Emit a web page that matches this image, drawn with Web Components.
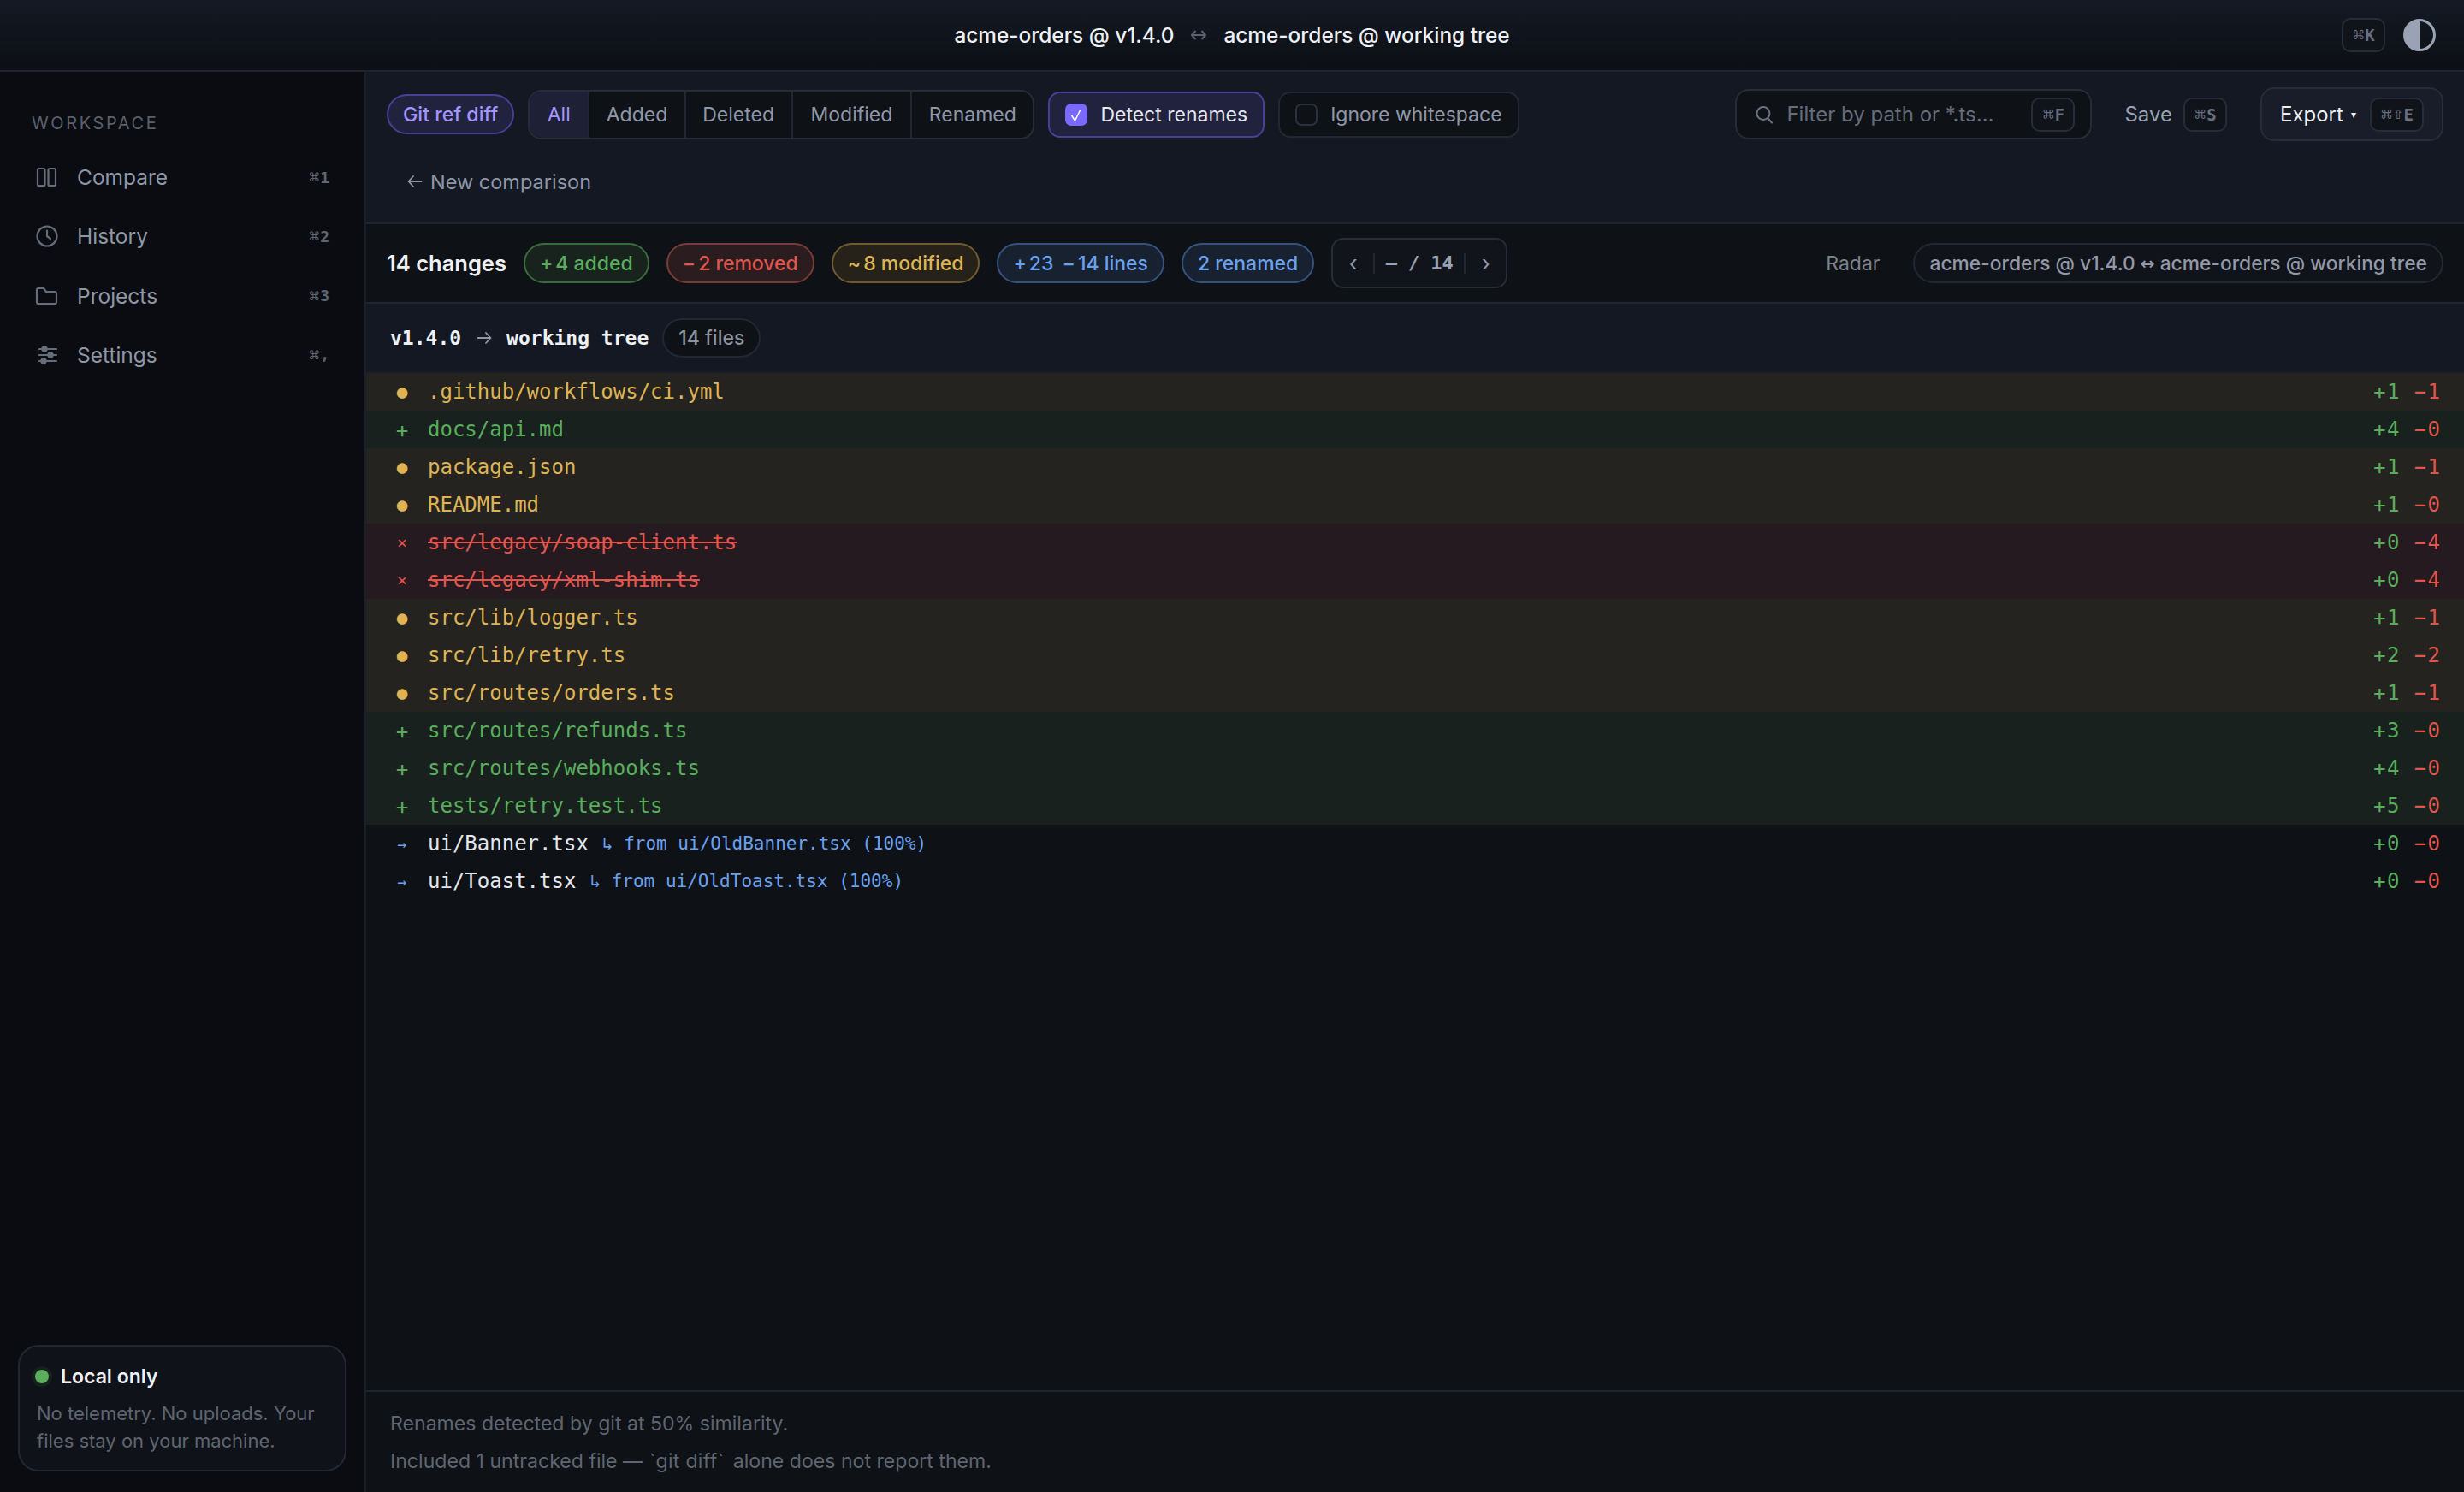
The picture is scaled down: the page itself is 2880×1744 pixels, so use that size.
<!doctype html>
<html>
<head>
<meta charset="utf-8">
<title>acme-orders diff</title>
<style>
  html, body { margin: 0; height: 100%; background: #0e1116; }
  body { font-family: Inter, "Liberation Sans", sans-serif; color: #e8eaee; }
</style>
</head>
<body>
<diff-app></diff-app>

<script>
const html = String.raw;

// small helper, every element here is just a template + open shadow root
function define(name, markup, extra) {
  const tmpl = document.createElement('template');
  tmpl.innerHTML = markup;
  class El extends HTMLElement {
    connectedCallback() {
      if (this.shadowRoot) return;
      const root = this.attachShadow({ mode: 'open' });
      root.appendChild(tmpl.content.cloneNode(true));
      if (extra) extra.call(this, root);
    }
  }
  customElements.define(name, El);
}

const MONO = `"DejaVu Sans Mono", "Liberation Mono", monospace`;
const TICK = '`';

define('kbd-key', html`
  <style>
    :host { display: inline-flex; align-items: center; justify-content: center; box-sizing: border-box;
      height: 40px; min-width: 51px; border: 2px solid #262c38; border-radius: 10px;
      font: 700 19px ${MONO}; color: #687080; background: #10131a; }
    :host([wide]) { min-width: 63px; }
    :host([bare]) { height: auto; min-width: 0; border: 0; background: none; font-size: 18px; color: #5f6673; }
    ::slotted(i) { font: 400 15px "DejaVu Sans", sans-serif; }
    :host([bare]) ::slotted(i) { font-size: 14px; }
  </style>
  <slot></slot>
`);

define('app-header', html`
  <style>
    :host { display: grid; grid-template-columns: 1fr auto 1fr; align-items: center; box-sizing: border-box;
      height: 84px; padding: 0 33px; border-bottom: 2px solid #1f2530;
      background: linear-gradient(#141924, #0c0f14); }
    .title { grid-column: 2; display: flex; align-items: center; gap: 20px; font-size: 24.400px; font-weight: 500; color: #eef0f3; }
    .title svg { display: block; }
    .right { grid-column: 3; justify-self: end; display: flex; align-items: center; gap: 21px; }
    .theme { display: block; }
  </style>
  <div class="title">
    <span>acme-orders @ v1.4.0</span>
    <svg width="18" height="14" viewBox="0 0 18 14" fill="none" stroke="#5b6270" stroke-width="2"><path d="M1 7h16M5.500 2 1 7l4.500 5M12.500 2 17 7l-4.500 5"/></svg>
    <span>acme-orders @ working tree</span>
  </div>
  <div class="right">
    <kbd-key><i>⌘</i>K</kbd-key>
    <svg class="theme" width="38" height="38" viewBox="0 0 38 38"><circle cx="19" cy="19" r="17.500" fill="none" stroke="#9aa3b5" stroke-width="3"/><path d="M19 1.500a17.500 17.500 0 0 0 0 35z" fill="#9aa3b5"/></svg>
  </div>
`);

define('nav-item', html`
  <style>
    :host { display: grid; grid-template-columns: 28px 1fr auto; column-gap: 21px; align-items: center;
      height: 60px; padding: 0 20px; font-size: 24.500px; color: #8f97a6; }
    ::slotted(svg) { display: block; }
  </style>
  <slot name="icon"></slot>
  <span><slot></slot></span>
  <slot name="key"></slot>
`);

define('local-card', html`
  <style>
    :host { display: block; box-sizing: border-box; height: 148px; margin-top: auto; padding: 20px 20px;
      border: 2px solid #222833; border-radius: 24px; background: #0f1319; }
    .head { display: flex; align-items: center; gap: 14px; font-size: 23px; font-weight: 600; color: #eef0f3; height: 30px; }
    .dot { width: 16px; height: 16px; border-radius: 50%; background: #5aad5c; box-shadow: 0 0 0 4px #16211c; margin-left: -2px; }
    p { margin: 12px 0 0; font-size: 22px; line-height: 32px; color: #5f6570; }
  </style>
  <div class="head"><span class="dot"></span><span>Local only</span></div>
  <p>No telemetry. No uploads. Your files stay on your machine.</p>
`);

define('side-nav', html`
  <style>
    :host { display: flex; flex-direction: column; box-sizing: border-box; width: 428px; padding: 47px 21px 24px;
      border-right: 2px solid #1a1f29; background: #0a0c11; }
    .label { font-size: 20px; line-height: 26px; letter-spacing: 2.600px; color: #5a606c; padding-left: 16px; margin-bottom: 20px; }
    nav { display: flex; flex-direction: column; gap: 9.300px; }
    svg { fill: none; stroke: #666d7a; stroke-width: 2.200; stroke-linecap: round; stroke-linejoin: round; }
  </style>
  <div class="label">WORKSPACE</div>
  <nav>
    <nav-item><svg slot="icon" width="28" height="24" viewBox="0 0 28 24"><rect x="3" y="2" width="8.500" height="20" rx="1.500"/><rect x="15.500" y="2" width="8.500" height="20" rx="1.500"/></svg>Compare<kbd-key bare slot="key"><i>⌘</i>1</kbd-key></nav-item>
    <nav-item><svg slot="icon" width="28" height="26" viewBox="0 0 28 26"><circle cx="14" cy="13" r="11.500"/><path d="M14 6.500V13l4 3"/></svg>History<kbd-key bare slot="key"><i>⌘</i>2</kbd-key></nav-item>
    <nav-item><svg slot="icon" width="28" height="22" viewBox="0 0 28 22"><path d="M3 4a2 2 0 0 1 2-2h6l3 4h10a2 2 0 0 1 2 2v10a2 2 0 0 1-2 2H5a2 2 0 0 1-2-2z" transform="translate(-1 0)"/></svg>Projects<kbd-key bare slot="key"><i>⌘</i>3</kbd-key></nav-item>
    <nav-item><svg slot="icon" width="28" height="24" viewBox="0 0 28 24"><path d="M5 5h20M5 12h20M5 19h20"/><circle cx="11" cy="5" r="2.600" fill="#666d7a"/><circle cx="18" cy="12" r="2.600" fill="#666d7a"/><circle cx="10" cy="19" r="2.600" fill="#666d7a"/></svg>Settings<kbd-key bare slot="key"><i>⌘</i>,</kbd-key></nav-item>
  </nav>
  <local-card></local-card>
`);

define('seg-tabs', html`
  <style>
    :host { display: flex; box-sizing: border-box; height: 58px; border: 2px solid #262c38; border-radius: 16px;
      overflow: hidden; background: #0e1116; font-size: 23px; color: #8f97a6; }
    span { display: flex; align-items: center; padding: 0 19.500px; border-left: 2px solid #222833; }
    span:first-of-type { border-left: 0; padding: 0 20.500px; background: #1e2036; color: #a594ff; }
    span:nth-of-type(4) { padding: 0 21px; }
  </style>
  <span>All</span><span>Added</span><span>Deleted</span><span>Modified</span><span>Renamed</span>
`);

define('check-chip', html`
  <style>
    :host { display: inline-flex; align-items: center; gap: 15px; box-sizing: border-box; height: 54px; padding: 0 18px;
      border: 2px solid #222833; border-radius: 14px; background: #0e1116; font-size: 23px; color: #8f97a6; }
    :host([on]) { border-color: #4a3f96; background: #20223e; color: #e4e6ee; }
    .box { box-sizing: border-box; width: 26px; height: 26px; border: 2px solid #2a303c; border-radius: 7px; display: flex; align-items: center; justify-content: center; }
    :host([on]) .box { background: #7a68ff; border-color: #7a68ff; }
    svg { display: none; }
    :host([on]) svg { display: block; }
  </style>
  <span class="box"><svg width="16" height="16" viewBox="0 0 16 16" fill="none" stroke="#fff" stroke-width="1.600"><path d="M2.500 9 6.500 15 13 2"/></svg></span>
  <span><slot></slot></span>
`);

define('search-box', html`
  <style>
    :host { display: flex; align-items: center; box-sizing: border-box; width: 417px; height: 59px; padding: 0 18px 0 21px;
      border: 2px solid #262c38; border-radius: 16px; background: #0e1116; font-size: 24px; color: #666d7a; }
    svg { display: block; margin-right: 15px; flex: none; }
    span { flex: 1; }
  </style>
  <svg width="22" height="22" viewBox="0 0 22 22" fill="none" stroke="#6b7280" stroke-width="2" stroke-linecap="round"><circle cx="10" cy="9.500" r="7.500"/><path d="m15.500 15.500 4.500 5"/></svg>
  <span>Filter by path or *.ts…</span>
  <kbd-key><i>⌘</i>F</kbd-key>
`);

define('tool-bar', html`
  <style>
    :host { display: block; box-sizing: border-box; height: 178px; padding: 18px 24px 0; border-bottom: 2px solid #1f2530; background: #131822; }
    .row { display: flex; align-items: center; height: 63px; }
    .ref { display: flex; align-items: center; box-sizing: border-box; height: 47px; padding: 0 17px; border: 2px solid #4a3f96; border-radius: 24px;
      background: #20223e; color: #a594ff; font-size: 23.200px; font-weight: 500; margin-right: 16px; }
    seg-tabs { margin-right: 16px; }
    check-chip { margin-right: 16px; }
    .spacer { flex: 1; }
    .save { display: flex; align-items: center; gap: 13px; margin: 0 39px 0 38px; font-size: 24px; color: #9aa1ae; }
    .export { display: flex; align-items: center; box-sizing: border-box; height: 63px; width: 214px; padding: 0 21px 0 21px;
      border: 2px solid #262c38; border-radius: 16px; background: #181d29; font-size: 24px; color: #eef0f3; }
    .caret { font-size: 12px; margin-left: 9px; flex: 1; }
    .back { display: flex; align-items: center; gap: 9px; height: 46px; margin-top: 24px; padding-left: 24px; font-size: 23.500px; color: #8f97a6; }
    .back svg { display: block; }
  </style>
  <div class="row">
    <span class="ref">Git ref diff</span>
    <seg-tabs></seg-tabs>
    <check-chip on>Detect renames</check-chip>
    <check-chip>Ignore whitespace</check-chip>
    <span class="spacer"></span>
    <search-box></search-box>
    <span class="save">Save <kbd-key><i>⌘</i>S</kbd-key></span>
    <span class="export">Export<span class="caret">▾</span><kbd-key wide><i>⌘</i><i>⇧</i>E</kbd-key></span>
  </div>
  <div class="back">
    <svg width="18" height="18" viewBox="0 0 18 18" fill="none" stroke="#8f97a6" stroke-width="1.800" stroke-linecap="round" stroke-linejoin="round"><path d="M16.500 9h-15M7 3 1.500 9 7 15"/></svg>
    <span>New comparison</span>
  </div>
`);

define('stat-pill', html`
  <style>
    :host { display: inline-flex; align-items: center; box-sizing: border-box; height: 47px; padding: 0 17px; border: 2px solid; border-radius: 24px; font-size: 23px; font-weight: 500; white-space: pre; }
    :host([tone=green]) { color: #5aad5c; border-color: #3a6b3c; background: #18231e; }
    :host([tone=red]) { color: #e0564e; border-color: #7a3a36; background: #2a1c1f; }
    :host([tone=amber]) { color: #dfb354; border-color: #6f5a30; background: #262219; }
    :host([tone=blue]) { color: #6aa0f0; border-color: #36527f; background: #17212f; }
    ::slotted(i) { font-style: normal; margin-right: 3px; }
  </style>
  <slot></slot>
`);

define('pager-box', html`
  <style>
    :host { display: inline-flex; align-items: center; box-sizing: border-box; width: 206px; height: 59px; border: 2px solid #262c38; border-radius: 14px; background: #11141b; color: #8f97a6; }
    .nav { width: 47px; text-align: center; font: 26px Inter, sans-serif; }
    .mid { flex: 1; height: 24px; border: solid #222833; border-width: 0 2px; display: flex; align-items: center; justify-content: center; gap: 13px; font: 600 22px ${MONO}; color: #9aa3b5; white-space: pre; }
  </style>
  <span class="nav">‹</span>
  <span class="mid"><span>–</span><span>/</span><span>14</span></span>
  <span class="nav">›</span>
`);

define('summary-bar', html`
  <style>
    :host { display: flex; align-items: center; gap: 20px; box-sizing: border-box; height: 93px; padding: 0 24px; border-bottom: 2px solid #1f2530; background: #0e1116; }
    b { font-size: 25.500px; font-weight: 600; color: #eef0f3; }
    stat-pill, pager-box { flex: none; }
    .spacer { flex: 1; }
    .radar { font-size: 23px; color: #7c828d; margin-right: 19px; }
    .cmp { display: flex; align-items: center; box-sizing: border-box; height: 47px; padding: 0 17px; border: 2px solid #222833; border-radius: 24px; font-size: 22.800px; font-weight: 500; color: #9298a5; background: #10131a; white-space: pre; }
    .cmp i { font: 700 20px "DejaVu Sans", sans-serif; }
    .lines { margin-left: 4px; }
  </style>
  <b>14 changes</b>
  <stat-pill tone="green"><i>+</i>4 added</stat-pill>
  <stat-pill tone="red"><i>−</i>2 removed</stat-pill>
  <stat-pill tone="amber"><i>~</i>8 modified</stat-pill>
  <stat-pill tone="blue"><i>+</i>23 <i class="lines">−</i>14 lines</stat-pill>
  <stat-pill tone="blue">2 renamed</stat-pill>
  <pager-box></pager-box>
  <span class="spacer"></span>
  <span class="radar">Radar</span>
  <span class="cmp">acme-orders @ v1.4.0 <i>↔</i> acme-orders @ working tree</span>
`);

define('file-row', html`
  <style>
    :host { display: flex; align-items: center; box-sizing: border-box; height: 44px; padding: 0 28px; font: 24px ${MONO}; color: #e4e6ea; white-space: pre; }
    :host([kind=mod]) { background: #25231f; color: #dfb354; }
    :host([kind=add]) { background: #18211e; color: #5aad5c; }
    :host([kind=del]) { background: #251a20; color: #e0564e; }
    .mark { width: 28px; margin-right: 16px; text-align: center; font-size: 21px; flex: none; }
    :host([kind=add]) .mark { font: 26px/1 Inter, sans-serif; }
    :host([kind=ren]) .mark { color: #6aa0f0; font-size: 18px; }
    :host([kind=del]) .mark { font-size: 20px; }
    :host([kind=del]) .path { text-decoration: line-through; }
    .from { margin-left: 16px; font-size: 21px; color: #6aa0f0; }
    .counts { margin-left: auto; display: flex; gap: 16px; }
    .a { color: #5aad5c; } .d { color: #e0564e; }
    .counts i { font: 26px/1 Inter, sans-serif; }
  </style>
  <span class="mark"></span>
  <span class="path"></span>
  <span class="from"></span>
  <span class="counts"><span class="a"><i>+</i><span class="an"></span></span><span class="d"><i>−</i><span class="dn"></span></span></span>
`, function (root) {
  const k = this.getAttribute('kind');
  root.querySelector('.mark').textContent = { mod: '●', add: '+', del: '×', ren: '→' }[k];
  root.querySelector('.path').textContent = this.getAttribute('path');
  root.querySelector('.from').textContent = this.getAttribute('from') || '';
  root.querySelector('.an').textContent = this.getAttribute('a');
  root.querySelector('.dn').textContent = this.getAttribute('d');
});

const files = [
  ['mod', '.github/workflows/ci.yml', 1, 1],
  ['add', 'docs/api.md', 4, 0],
  ['mod', 'package.json', 1, 1],
  ['mod', 'README.md', 1, 0],
  ['del', 'src/legacy/soap-client.ts', 0, 4],
  ['del', 'src/legacy/xml-shim.ts', 0, 4],
  ['mod', 'src/lib/logger.ts', 1, 1],
  ['mod', 'src/lib/retry.ts', 2, 2],
  ['mod', 'src/routes/orders.ts', 1, 1],
  ['add', 'src/routes/refunds.ts', 3, 0],
  ['add', 'src/routes/webhooks.ts', 4, 0],
  ['add', 'tests/retry.test.ts', 5, 0],
  ['ren', 'ui/Banner.tsx', 0, 0, '↳ from ui/OldBanner.tsx (100%)'],
  ['ren', 'ui/Toast.tsx', 0, 0, '↳ from ui/OldToast.tsx (100%)'],
];

define('file-list', html`
  <style>
    :host { display: block; flex: 1; min-height: 0; background: #0e1116; }
    .title { display: flex; align-items: center; box-sizing: border-box; height: 81px; padding: 0 28px; border-bottom: 2px solid #171c26; background: #131822; font: 700 23px ${MONO}; color: #eef0f3; white-space: pre; }
    .title svg { display: block; margin: 0 17px 0 18px; }
    .count { display: flex; align-items: center; box-sizing: border-box; height: 46px; margin-left: 16px; padding: 0 17px; border: 2px solid #222833; border-radius: 23px; background: #0e1116; font: 500 23px Inter, sans-serif; color: #8c93a0; }
  </style>
  <div class="title">
    <span>v1.4.0</span>
    <svg width="18" height="16" viewBox="0 0 18 16" fill="none" stroke="#8f97a6" stroke-width="1.800" stroke-linecap="round" stroke-linejoin="round"><path d="M1.500 8h15M11 2l5.500 6-5.500 6"/></svg>
    <span>working tree</span>
    <span class="count">14 files</span>
  </div>
  <div class="rows"></div>
`, function (root) {
  const rows = root.querySelector('.rows');
  files.forEach(f => {
    const el = document.createElement('file-row');
    el.setAttribute('kind', f[0]);
    el.setAttribute('path', f[1]);
    el.setAttribute('a', f[2]);
    el.setAttribute('d', f[3]);
    if (f[4]) el.setAttribute('from', f[4]);
    rows.appendChild(el);
  });
});

define('foot-notes', html`
  <style>
    :host { display: block; box-sizing: border-box; height: 119px; padding: 15px 28px 0; border-top: 2px solid #1f2530; background: #0e1116; font-size: 23.100px; line-height: 44px; color: #5f6570; }
    div { white-space: pre; }
    span { margin: 0 4px 0 1px; letter-spacing: .3px; }
  </style>
  <div>Renames detected by git at 50% similarity.</div>
  <div>Included 1 untracked file — <span>${TICK}git diff${TICK}</span> alone does not report them.</div>
`);

define('diff-app', html`
  <style>
    :host { display: flex; flex-direction: column; height: 1744px; }
    .body { flex: 1; display: flex; min-height: 0; }
    main { flex: 1; min-width: 0; display: flex; flex-direction: column; }
  </style>
  <app-header></app-header>
  <div class="body">
    <side-nav></side-nav>
    <main>
      <tool-bar></tool-bar>
      <summary-bar></summary-bar>
      <file-list></file-list>
      <foot-notes></foot-notes>
    </main>
  </div>
`);
</script>
</body>
</html>
